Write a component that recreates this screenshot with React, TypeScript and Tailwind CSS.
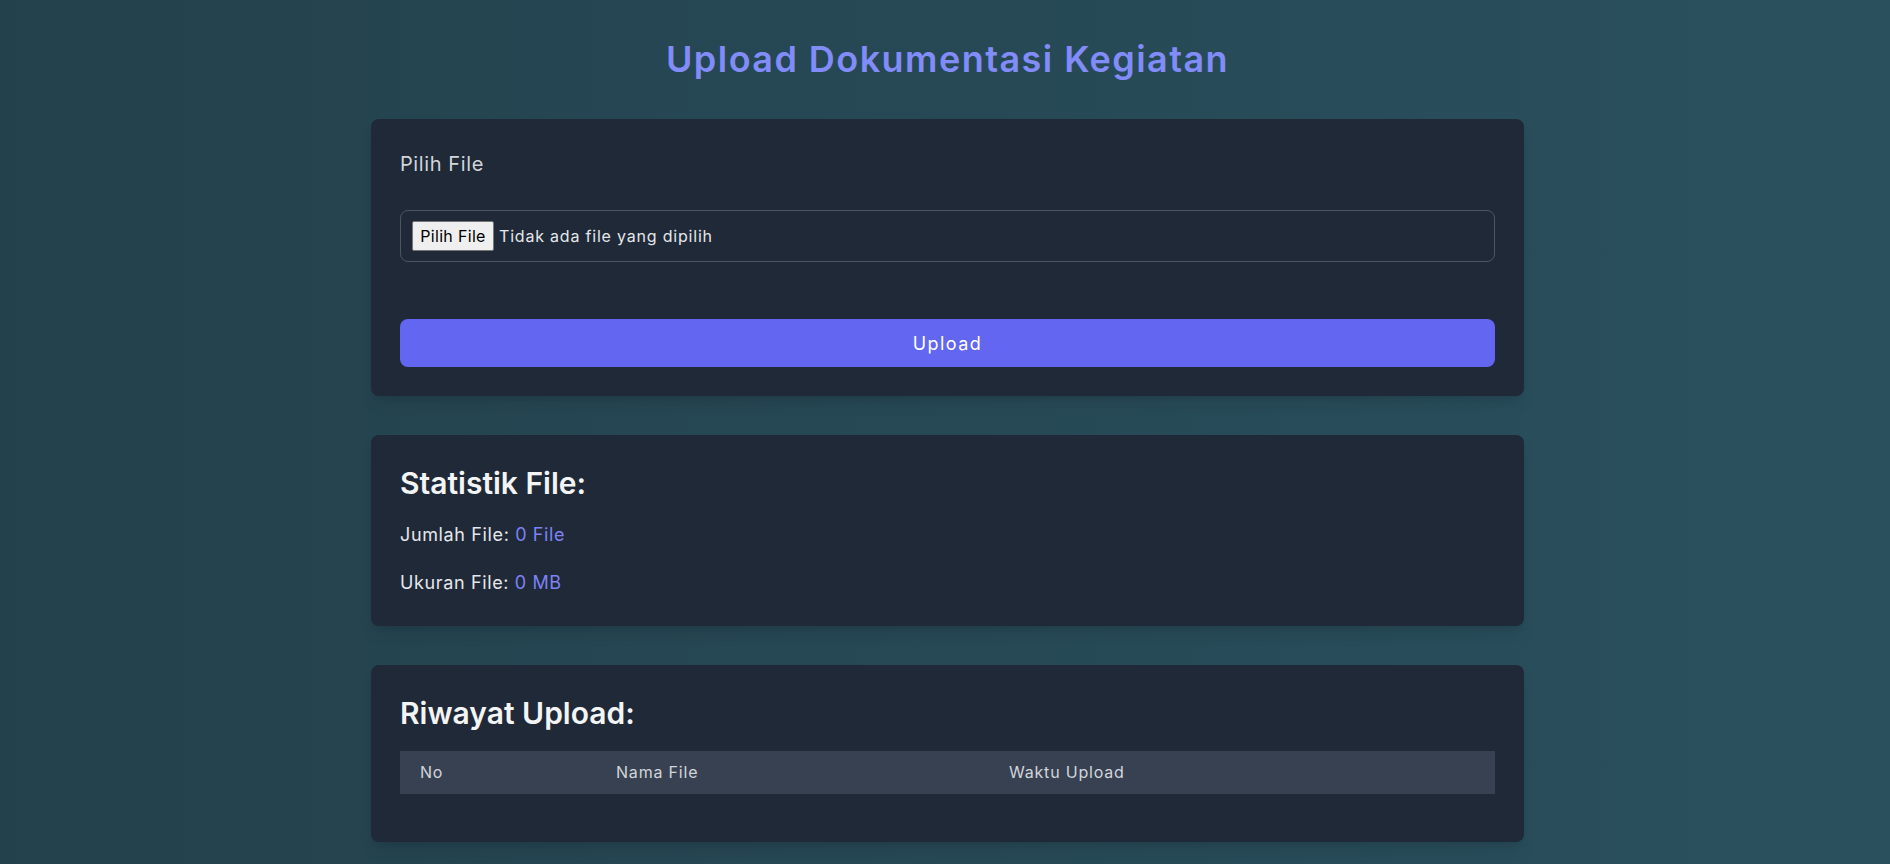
import React from "react";

export default function App() {
  return (
    <div
      className="min-h-screen w-full bg-gradient-to-r from-[#23414d] to-[#2a505e] pl-[5px] pt-[37px] pb-[40px] text-[#e5e7eb]"
      style={{ fontFamily: "Inter, 'Noto Sans', sans-serif" }}
    >
      <h1 className="text-center text-[36px] leading-[44px] font-semibold tracking-[0.04em] text-[#818cf8]">
        Upload Dokumentasi Kegiatan
      </h1>

      <div className="mx-auto mt-[38px] w-[1153px] flex flex-col gap-[39px]">
        {/* Upload card */}
        <div className="rounded-lg bg-[#1f2937] px-[29px] pt-[30px] pb-[29px] shadow-lg">
          <label className="block text-[20px] leading-[30px] tracking-[0.03em] text-[#d1d5db]">Pilih File</label>
          <div className="mt-[31px] flex h-[52px] items-center rounded-lg border border-[#4b5563] pl-[11px]">
            <button
              type="button"
              className="flex h-[30px] w-[82px] items-center justify-center rounded-[2px] border border-[#767676] bg-[#efefef] text-[16px] leading-none tracking-[0.02em] text-black"
            >
              Pilih File
            </button>
            <span className="ml-[5px] text-[16px] tracking-[0.05em] text-[#e5e7eb]">Tidak ada file yang dipilih</span>
          </div>
          <button
            type="button"
            className="mt-[57px] flex h-[48px] w-full items-center justify-center rounded-lg bg-[#6366f1] text-[18px] tracking-[0.08em] text-white"
          >
            Upload
          </button>
        </div>

        {/* Stats card */}
        <div className="rounded-lg bg-[#1f2937] px-[29px] pt-[30px] pb-[30px] shadow-lg">
          <h2 className="text-[30px] leading-[36px] font-semibold text-[#f3f4f6]">Statistik File:</h2>
          <p className="mt-[20px] text-[18px] leading-[27px] tracking-[0.035em] text-[#e5e7eb]">
            Jumlah File: <span className="text-[#7c83f5]">0 File</span>
          </p>
          <p className="mt-[21px] text-[18px] leading-[27px] tracking-[0.035em] text-[#e5e7eb]">
            Ukuran File: <span className="text-[#7c83f5]">0 MB</span>
          </p>
        </div>

        {/* History card */}
        <div className="rounded-lg bg-[#1f2937] px-[29px] pt-[30px] pb-[30px] shadow-lg">
          <h2 className="text-[30px] leading-[36px] font-semibold text-[#f3f4f6]">Riwayat Upload:</h2>
          <table className="mt-[20px] mb-[18px] w-full table-fixed border-collapse">
            <colgroup>
              <col className="w-[196px]" />
              <col className="w-[393px]" />
              <col />
            </colgroup>
            <thead>
              <tr className="bg-[#374151]">
                <th className="py-[12px] pl-[20px] text-left text-[16px] leading-[19px] font-normal tracking-[0.05em] text-[#d1d5db]">No</th>
                <th className="py-[12px] pl-[20px] text-left text-[16px] leading-[19px] font-normal tracking-[0.05em] text-[#d1d5db]">Nama File</th>
                <th className="py-[12px] pl-[20px] text-left text-[16px] leading-[19px] font-normal tracking-[0.05em] text-[#d1d5db]">Waktu Upload</th>
              </tr>
            </thead>
            <tbody></tbody>
          </table>
        </div>
      </div>
    </div>
  );
}
